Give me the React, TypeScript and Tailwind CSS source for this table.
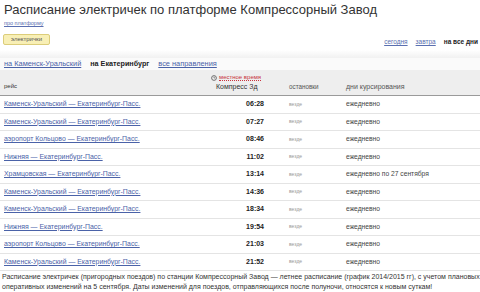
import React from "react";

const rows: [string, string, string][] = [
  ["Каменск-Уральский — Екатеринбург-Пасс.", "06:28", "ежедневно"],
  ["Каменск-Уральский — Екатеринбург-Пасс.", "07:27", "ежедневно"],
  ["аэропорт Кольцово — Екатеринбург-Пасс.", "08:46", "ежедневно"],
  ["Нижняя — Екатеринбург-Пасс.", "11:02", "ежедневно"],
  ["Храмцовская — Екатеринбург-Пасс.", "13:14", "ежедневно по 27 сентября"],
  ["Каменск-Уральский — Екатеринбург-Пасс.", "14:36", "ежедневно"],
  ["Каменск-Уральский — Екатеринбург-Пасс.", "18:34", "ежедневно"],
  ["Нижняя — Екатеринбург-Пасс.", "19:54", "ежедневно"],
  ["аэропорт Кольцово — Екатеринбург-Пасс.", "21:03", "ежедневно"],
  ["Каменск-Уральский — Екатеринбург-Пасс.", "21:52", "ежедневно"],
];

export default function App() {
  return (
    <div
      className="w-[480px] h-[292px] bg-white overflow-hidden text-[#222]"
      style={{ fontFamily: '"Liberation Sans", Arial, sans-serif' }}
    >
      <div className="h-[19px] pl-[4px] pt-[2px] text-[13px] leading-[15px] text-[#333] whitespace-nowrap">
        Расписание электричек по платформе Компрессорный Завод
      </div>
      <div className="h-[9px] pl-[4px] text-[5.5px] leading-[8px] text-[#5a6fb0] underline">
        про платформу
      </div>
      <div className="h-[22px] flex items-center justify-between pl-[3px] pr-[2px]">
        <div className="h-[11px] px-[7px] flex items-center rounded-[2px] border border-[#dccd7a] bg-[#f8efb5] text-[6px] text-[#555]">
          электрички
        </div>
        <div className="flex items-center gap-[8px] text-[6.5px] pt-[6px]">
          <span className="text-[#5a6fb0] underline">сегодня</span>
          <span className="text-[#5a6fb0] underline">завтра</span>
          <span className="font-bold text-[#222]">на все дни</span>
        </div>
      </div>
      <div className="h-[8px] bg-gradient-to-b from-white to-[#f1f1f1]" />
      <div className="h-[12px] flex items-center gap-[9px] pl-[4px] text-[7.4px] bg-[#fafafa]">
        <span className="text-[#4a62a8] underline">на Каменск-Уральский</span>
        <span className="font-bold text-[#222] text-[7.2px]">на Екатеринбург</span>
        <span className="text-[#4a62a8] underline">все направления</span>
      </div>
      <div className="h-[26px] bg-[#eeeeee] border-b border-[#9a9a9a] relative">
        <div className="absolute left-[211px] top-[4px] flex items-center gap-[2px]">
          <svg width="6" height="6" viewBox="0 0 6 6">
            <circle cx="3" cy="3" r="2.4" fill="none" stroke="#555" strokeWidth="0.8" />
            <path d="M3 1.6V3h1.1" stroke="#555" strokeWidth="0.6" fill="none" />
          </svg>
          <span className="text-[#c8333c] text-[6px] border-b border-dotted border-[#c8333c] leading-[6px]">
            местное время
          </span>
        </div>
        <div className="absolute left-0 right-0 bottom-[3px] flex text-[#333]">
          <div className="w-[214px] pl-[4px] text-[6px]">рейс</div>
          <div className="w-[75px] pl-[2px] text-[7px]">Компресс Зд</div>
          <div className="w-[57px] text-[6.3px] text-[#555]">остановки</div>
          <div className="flex-1 text-[7px] text-[#555]">дни курсирования</div>
        </div>
      </div>
      {rows.map(([route, time, days], i) => (
        <div key={i} className="h-[17.5px] flex items-center border-b border-[#e4e4e4]">
          <div className="w-[214px] pl-[4px] text-[6.9px] text-[#4a62a8] underline whitespace-nowrap">{route}</div>
          <div className="w-[50px] text-right font-bold text-[7px] text-[#222]">{time}</div>
          <div className="w-[25px]" />
          <div className="w-[57px] text-[5px] text-[#999]">везде</div>
          <div className="flex-1 text-[6.7px] text-[#444]">{days}</div>
        </div>
      ))}
      <div className="px-[2px] pt-[1px] text-[7px] leading-[10px] text-[#333] whitespace-nowrap">
        Расписание электричек (пригородных поездов) по станции Компрессорный Завод — летнее расписание (график 2014/2015 гг), с учетом плановых
        <br />
        оперативных изменений на 5 сентября. Даты изменений для поездов, отправляющихся после полуночи, относятся к новым суткам!
      </div>
    </div>
  );
}
